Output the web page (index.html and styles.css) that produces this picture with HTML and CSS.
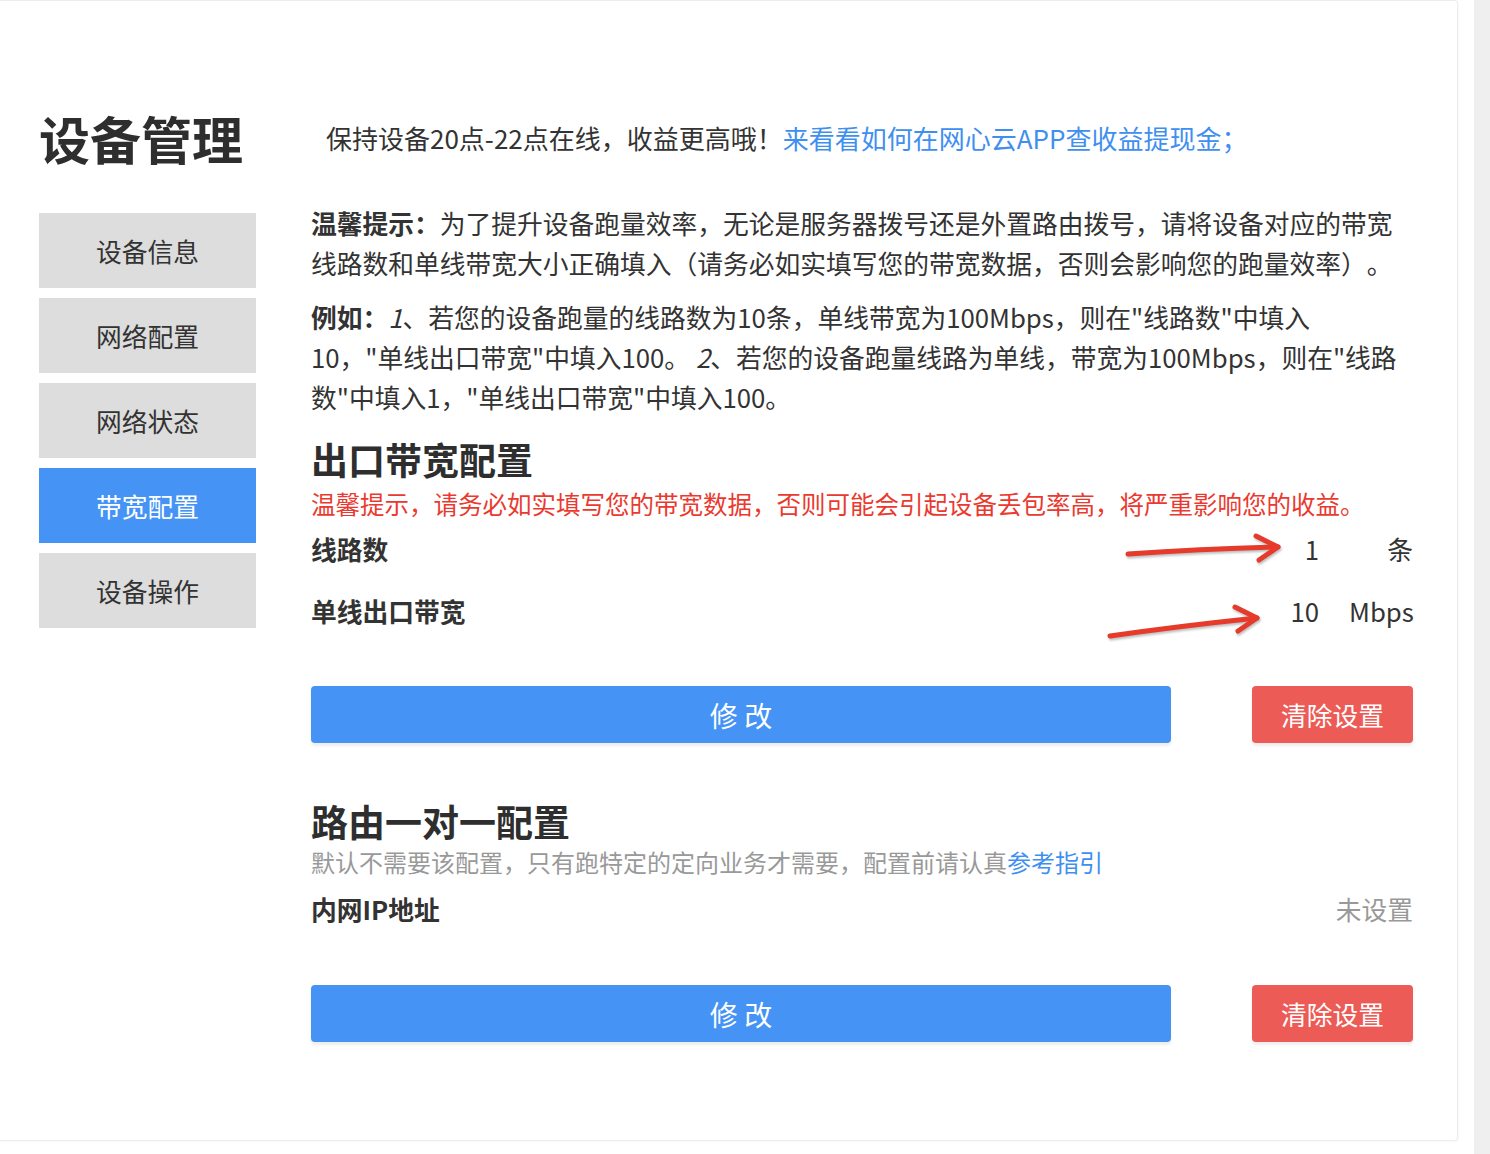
FILE: index.html
```html
<!DOCTYPE html>
<html>
<head>
    <meta charset="utf-8">
    <title>设备管理</title>
    <link rel="stylesheet" href="styles.css">
</head>
<body>
<div class="page">
    <div class="card">
        <div class="layout">
            <h1 class="title">设备管理</h1>
            <div class="notice">保持设备20点-22点在线，收益更高哦！<a href="#">来看看如何在网心云APP查收益提现金；</a></div>

            <ul class="nav">
                <li>设备信息</li>
                <li>网络配置</li>
                <li>网络状态</li>
                <li class="active">带宽配置</li>
                <li>设备操作</li>
            </ul>

            <div class="content">
                <p class="tip"><b>温馨提示：</b>为了提升设备跑量效率，无论是服务器拨号还是外置路由拨号，请将设备对应的带宽线路数和单线带宽大小正确填入（请务必如实填写您的带宽数据，否则会影响您的跑量效率）。</p>
                <p class="tip"><b>例如：</b><i>1</i>、若您的设备跑量的线路数为10条，单线带宽为100Mbps，则在"线路数"中填入<br>10，"单线出口带宽"中填入100。 <i>2</i>、若您的设备跑量线路为单线，带宽为100Mbps，则在"线路<br>数"中填入1，"单线出口带宽"中填入100。</p>

                <div class="section">
                    <h2>出口带宽配置</h2>
                    <div class="warn">温馨提示，请务必如实填写您的带宽数据，否则可能会引起设备丢包率高，将严重影响您的收益。</div>
                    <div class="row">
                        <span class="label">线路数</span>
                        <span class="field"><span class="value">1</span><span class="unit">条</span></span>
                    </div>
                    <div class="row">
                        <span class="label">单线出口带宽</span>
                        <span class="field"><span class="value">10</span><span class="unit">Mbps</span></span>
                    </div>
                    <div class="actions">
                        <button class="btn btn-primary">修 改</button>
                        <button class="btn btn-danger">清除设置</button>
                    </div>
                </div>

                <div class="section section-route">
                    <h2>路由一对一配置</h2>
                    <div class="desc">默认不需要该配置，只有跑特定的定向业务才需要，配置前请认真<a href="#">参考指引</a></div>
                    <div class="row">
                        <span class="label">内网IP地址</span>
                        <span class="empty">未设置</span>
                    </div>
                    <div class="actions actions-route">
                        <button class="btn btn-primary">修 改</button>
                        <button class="btn btn-danger">清除设置</button>
                    </div>
                </div>
            </div>
        </div>

        <!-- 标注箭头 -->
        <svg class="arrows" width="200" height="130" viewBox="0 0 200 130">
            <g fill="none" stroke="#e63a2b" stroke-width="5" stroke-linecap="round" stroke-linejoin="round">
                <path d="M28 28 Q100 23 178 21"/>
                <path d="M156 10 L178 21 L159 34"/>
                <path d="M10 110 Q80 100 157 92"/>
                <path d="M135 81 L157 92 L138 105"/>
            </g>
        </svg>
    </div>
    <div class="scrollbar"></div>
</div>
</body>
</html>
```

FILE: styles.css
```css
body {
    margin: 0;
    background-color: #fff;
    color: #333;
    font-family: "Noto Sans CJK SC", "Noto Sans", sans-serif;
    text-spacing-trim: space-all;
}

a {
    color: #3f8ff0;
    text-decoration: none;
}

.page {
    display: flex;
    align-items: flex-start;
    height: 1154px;
    overflow: hidden;
}

.card {
    position: relative;
    box-sizing: border-box;
    width: 1458px;
    padding: 102px 44px 98px 39px;
    border: 1px solid #ececec;
    border-left: none;
    border-radius: 0 4px 4px 0;
    box-shadow: 1px 1px 2px rgba(0, 0, 0, 0.03);
}

.scrollbar {
    width: 16px;
    height: 1154px;
    margin-left: 16px;
    background-color: #efefef;
}

.layout {
    display: grid;
    grid-template-columns: 217px 1fr;
    column-gap: 55px;
    row-gap: 30px;
}

.title {
    margin: 0;
    font-size: 51px;
    line-height: 70px;
    font-weight: bold;
    color: #2e2e2e;
    white-space: nowrap;
}

.notice {
    padding-left: 15px;
    font-size: 26px;
    line-height: 70px;
    white-space: nowrap;
}

/* 左侧菜单 */
.nav {
    list-style: none;
    margin: 10px 0 0;
    padding: 0;
    display: flex;
    flex-direction: column;
    gap: 10px;
}

.nav li {
    height: 75px;
    line-height: 75px;
    text-align: center;
    font-size: 25.75px;
    background-color: #dddddd;
    color: #333;
}

.nav li.active {
    background-color: #4493f5;
    color: #fff;
}

/* 右侧内容 */
.content {
    min-width: 0;
}

.tip {
    margin: 0 0 14px;
    font-size: 25.75px;
    line-height: 40px;
}

.tip b {
    font-weight: bold;
}

.section {
    margin-top: 17px;
}

.section h2 {
    margin: 0;
    font-size: 37px;
    line-height: 50px;
    font-weight: bold;
    color: #2e2e2e;
}

.warn {
    margin: 2px 0 -5px;
    font-size: 24.5px;
    line-height: 36px;
    color: #ea3a30;
    white-space: nowrap;
}

.row {
    display: flex;
    align-items: center;
    justify-content: space-between;
    height: 62px;
    font-size: 25.75px;
}

.label {
    font-weight: bold;
}

.field {
    display: flex;
    align-items: center;
}

.value {
    margin-right: 30px;
}

.unit {
    width: 64px;
    text-align: right;
}

.empty {
    color: #999;
}

.actions {
    display: flex;
    justify-content: space-between;
    margin-top: 45px;
}

.btn {
    height: 57px;
    border: none;
    border-radius: 4px;
    color: #fff;
    font-family: inherit;
    cursor: pointer;
    box-shadow: 0 3px 3px rgba(0, 0, 0, 0.07);
}

.btn-primary {
    width: 860px;
    background-color: #4493f5;
    font-size: 28px;
}

.btn-danger {
    width: 161px;
    background-color: #ec5b55;
    font-size: 25.75px;
}

.section-route {
    margin-top: 53px;
}

.desc {
    font-size: 24px;
    line-height: 31px;
    color: #999;
    white-space: nowrap;
}

.actions-route {
    margin-top: 46px;
}

.arrows {
    position: absolute;
    left: 1100px;
    top: 525px;
    filter: drop-shadow(1px 2px 1px rgba(0, 0, 0, 0.25));
    pointer-events: none;
}
```
